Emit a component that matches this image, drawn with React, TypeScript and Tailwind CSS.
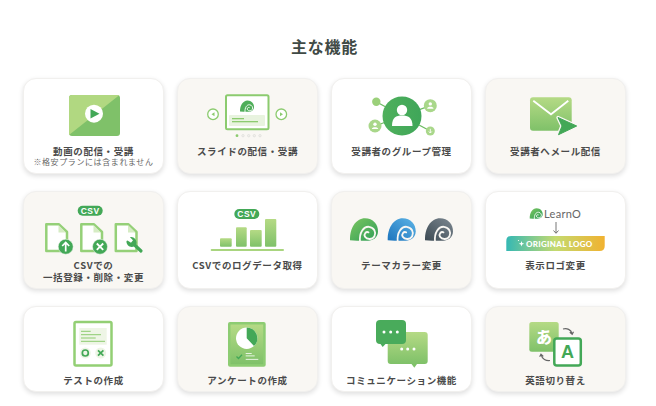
const DARK = "#43a857";
const MID = "#95d078";

function Defs() {
  return (
    <svg className="absolute h-0 w-0" aria-hidden="true">
      <defs>
        <linearGradient id="soft" x1="0" y1="0" x2="0" y2="1">
          <stop offset="0" stopColor="#b5da85" />
          <stop offset="1" stopColor="#7fc169" />
        </linearGradient>
        <linearGradient id="deep" x1="0" y1="0" x2="1" y2="0">
          <stop offset="0" stopColor="#4fb05c" />
          <stop offset="1" stopColor="#3fa659" />
        </linearGradient>
        <linearGradient id="swirlGreen" x1="0" y1="0" x2="1" y2="1">
          <stop offset="0" stopColor="#7cc660" />
          <stop offset="1" stopColor="#2f9e58" />
        </linearGradient>
        <linearGradient id="swirlBlue" x1="0" y1="1" x2="1" y2="0">
          <stop offset="0" stopColor="#1c74bd" />
          <stop offset="1" stopColor="#5db4e6" />
        </linearGradient>
        <linearGradient id="swirlGrey" x1="0" y1="1" x2="1" y2="0">
          <stop offset="0" stopColor="#3c4a53" />
          <stop offset="1" stopColor="#7c8790" />
        </linearGradient>
        <linearGradient id="banner" x1="0" y1="0" x2="1" y2="0">
          <stop offset="0" stopColor="#35b8b4" />
          <stop offset="0.5" stopColor="#c4da70" />
          <stop offset="1" stopColor="#f1b230" />
        </linearGradient>
      </defs>
    </svg>
  );
}

// swirl logo, drawn in a 28x22 box: a solid dome with a white spiral cut through it
function Swirl({ x, y, w, fill, cut = "#fff" }: { x: number; y: number; w: number; fill: string; cut?: string }) {
  const s = w / 28;
  return (
    <g transform={`translate(${x} ${y}) scale(${s})`}>
      <path d="M0 22C-0.5 10 6 0 15 0C23 0 28 6 28 13C28 19 23 22.500 18 22.500H7Z" fill={fill} />
      <path
        d="M10 23.500C9 14 14 8 19 8.500C24 9 26.500 14 24.500 18C22.500 21.500 17 21.500 15 18.500C13.500 15.500 16 13 18.500 14"
        fill="none"
        stroke={cut}
        strokeWidth="1.800"
        strokeLinecap="round"
      />
    </g>
  );
}

function VideoIcon() {
  return (
    <svg width="141" height="52" viewBox="0 0 141 52">
      <rect x="46" y="6" width="51" height="41" rx="3" fill="#7fc169" />
      <path d="M49 6H96.500L46 46V9Q46 6 49 6Z" fill="#b1d881" />
      <circle cx="71" cy="24.700" r="9" fill="#fff" />
      <path d="M67.500 20L76.500 24.700L67.500 29.500Z" fill={DARK} />
    </svg>
  );
}

function SlideIcon() {
  return (
    <svg width="141" height="52" viewBox="0 0 141 52">
      <rect x="49" y="6.300" width="42.500" height="34" rx="1.500" fill="#fff" stroke="#8ccb6f" strokeWidth="2" />
      <Swirl x={63} y={11.500} w={14} fill="#4fae5a" />
      <rect x="52" y="26" width="36" height="11" rx="1" fill="#e8f3df" />
      <rect x="55" y="29" width="12" height="1.300" fill="#8ccb6f" />
      <rect x="55" y="32" width="26" height="1.300" fill="#8ccb6f" />
      <circle cx="36" cy="25.300" r="5.300" fill="#fff" stroke="#8ccb6f" strokeWidth="1.300" />
      <path d="M37.500 23.300V27.300L34.500 25.300Z" fill="#8ccb6f" />
      <circle cx="104.300" cy="25.300" r="5.300" fill="#fff" stroke="#8ccb6f" strokeWidth="1.300" />
      <path d="M103 23.300V27.300L106 25.300Z" fill="#8ccb6f" />
      <circle cx="60" cy="46.700" r="1.400" fill="#8ccb6f" />
      <g fill="#f3f2ee" stroke="#d9d9d5" strokeWidth="0.600">
        <circle cx="66" cy="46.700" r="1.200" />
        <circle cx="71.700" cy="46.700" r="1.200" />
        <circle cx="77.300" cy="46.700" r="1.200" />
        <circle cx="83" cy="46.700" r="1.200" />
      </g>
    </svg>
  );
}

function MiniPerson({ cx, cy }: { cx: number; cy: number }) {
  return (
    <g fill="#fff">
      <circle cx={cx} cy={cy - 1.800} r="1.700" />
      <path d={`M${cx - 3.200} ${cy + 3}C${cx - 3.200} ${cy + 0.500} ${cx + 3.200} ${cy + 0.500} ${cx + 3.200} ${cy + 3}Z`} />
    </g>
  );
}

function GroupIcon() {
  return (
    <svg width="141" height="52" viewBox="0 0 141 52">
      <g stroke="#6dbb62" strokeWidth="1.300">
        <line x1="45.300" y1="12.700" x2="71" y2="27" />
        <line x1="99.300" y1="16.700" x2="71" y2="27" />
        <line x1="44" y1="37" x2="71" y2="27" />
        <line x1="99.300" y1="42" x2="71" y2="27" />
      </g>
      <circle cx="45.300" cy="12.700" r="4.200" fill="#9bd07a" />
      <circle cx="99.300" cy="16.700" r="6.500" fill="#a9d78a" />
      <MiniPerson cx={99.300} cy={16.700} />
      <circle cx="44" cy="37" r="6.500" fill="#a9d78a" />
      <MiniPerson cx={44} cy={37} />
      <circle cx="99.300" cy="42" r="4.500" fill="#a9d78a" />
      <path d="M99.300 39.800V43.800M97.800 42.500L99.300 44L100.800 42.500" stroke="#fff" strokeWidth="0.900" fill="none" />
      <circle cx="71" cy="27" r="19.500" fill="url(#deep)" />
      <circle cx="71" cy="21" r="5.200" fill="#fff" />
      <path d="M61 37C61 28.500 65 26.500 71 26.500C77 26.500 81.500 28.500 81.500 37Z" fill="#fff" />
    </svg>
  );
}

function MailIcon() {
  return (
    <svg width="141" height="52" viewBox="0 0 141 52">
      <rect x="45" y="8.300" width="41.700" height="33.400" rx="3" fill="url(#soft)" />
      <path d="M48.300 11.700L66 25.300L83.300 11.700" fill="none" stroke="#fff" strokeWidth="1.800" />
      <path d="M73 28.500L91.700 37L73.500 45.700L77 37Z" fill="#f9f7f3" stroke="#f9f7f3" strokeWidth="3.500" strokeLinejoin="round" />
      <path d="M73 28.500L91.700 37L73.500 45.700L77 37Z" fill={DARK} stroke={DARK} strokeWidth="1" strokeLinejoin="round" />
    </svg>
  );
}

function Pill({ x, y }: { x: number; y: number }) {
  return (
    <g>
      <rect x={x} y={y} width="25" height="10" rx="5" fill={DARK} />
      <text
        x={x + 12.500}
        y={y + 8}
        textAnchor="middle"
        fill="#fff"
        fontSize="8.500"
        fontWeight="700"
        letterSpacing="0.500"
        className="font-['Liberation_Sans',sans-serif]"
      >
        CSV
      </text>
    </g>
  );
}

function Doc({ x, y }: { x: number; y: number }) {
  return (
    <g>
      <path
        d={`M${x + 1.300} ${y + 1.300}H${x + 14}L${x + 22} ${y + 9}V${y + 28}H${x + 1.300}Z`}
        fill="#fff"
        stroke={MID}
        strokeWidth="2.500"
        strokeLinejoin="round"
      />
      <path d={`M${x + 13.500} ${y + 2}V${y + 9.500}H${x + 21}Z`} fill="#d6ecc4" />
    </g>
  );
}

function CsvDocsIcon() {
  return (
    <svg width="141" height="52" viewBox="0 0 141 52">
      <Pill x={54.700} y={2.700} />
      <Doc x={22} y={20} />
      <circle cx="42.700" cy="43.700" r="7.500" fill={DARK} stroke="#f9f7f3" strokeWidth="0.500" />
      <path d="M42.700 48.500V39.800M39.200 43L42.700 39.500L46.200 43" fill="none" stroke="#fff" strokeWidth="1.700" />
      <Doc x={57} y={20} />
      <circle cx="77" cy="43.700" r="7.500" fill={DARK} stroke="#f9f7f3" strokeWidth="0.500" />
      <path d="M73.800 40.500L80.200 46.900M80.200 40.500L73.800 46.900" stroke="#fff" strokeWidth="1.800" />
      <Doc x={91.500} y={20} />
      <path d="M110 40.500L118 48" stroke={DARK} strokeWidth="3.200" strokeLinecap="round" />
      <path d="M103.500 38C103 42.500 108 45.500 111.500 43L113.500 40.500C114 37 111 33.500 107.500 34L107 34.300L110 37.300L108 39.800L104.500 37.500Z" fill={DARK} />
    </svg>
  );
}

function LogDataIcon() {
  return (
    <svg width="141" height="52" viewBox="0 0 141 52">
      <Pill x={57.300} y={6} />
      <rect x="43" y="35.300" width="11.700" height="8.400" rx="1" fill="url(#soft)" />
      <rect x="59" y="24.300" width="10.700" height="19.400" rx="1" fill="url(#soft)" />
      <rect x="73" y="27" width="11.700" height="16.700" rx="1" fill="url(#soft)" />
      <rect x="88" y="16" width="11.300" height="27.700" rx="1" fill="url(#soft)" />
      <rect x="33.700" y="46" width="73.300" height="2" rx="1" fill="#a9d57f" />
    </svg>
  );
}

function ThemeIcon() {
  return (
    <svg width="141" height="52" viewBox="0 0 141 52">
      <Swirl x={19} y={15.300} w={28} fill="url(#swirlGreen)" cut="#f9f7f3" />
      <Swirl x={56.700} y={15.300} w={28} fill="url(#swirlBlue)" cut="#f9f7f3" />
      <Swirl x={94} y={15.300} w={28} fill="url(#swirlGrey)" cut="#f9f7f3" />
    </svg>
  );
}

function LogoIcon() {
  return (
    <svg width="141" height="52" viewBox="0 0 141 52">
      <Swirl x={44.700} y={5.300} w={13} fill="url(#swirlGreen)" />
      <text x="59" y="15" fontSize="11" fill="#666" letterSpacing="0.300" className="font-['Lato',sans-serif]">
        LearnO
      </text>
      <path d="M71 19V30M68.500 27.500L71 30.300L73.500 27.500" fill="none" stroke="#666" strokeWidth="0.900" />
      <path d="M26.300 33H119.700V43Q119.700 48 114.700 48H21.300V38Q21.300 33 26.300 33Z" fill="url(#banner)" />
      <path d="M36.500 38L37.200 40L39.200 40.700L37.200 41.400L36.500 43.400L35.800 41.400L33.800 40.700L35.800 40Z" fill="#fff" />
      <circle cx="33.500" cy="37.500" r="0.600" fill="#fff" />
      <text x="41" y="43.700" fontSize="8" fontWeight="900" fill="#fff" letterSpacing="0.300" className="font-['Lato',sans-serif]">
        ORIGINAL LOGO
      </text>
    </svg>
  );
}

function TestIcon() {
  return (
    <svg width="141" height="52" viewBox="0 0 141 52">
      <rect x="51.500" y="4" width="37" height="43.500" rx="1.500" fill="#fff" stroke="#93cf74" strokeWidth="2.500" />
      <rect x="56.300" y="10" width="27.400" height="16.700" fill="#eef5e6" />
      <g fill="#8ccb6f">
        <rect x="58" y="12.800" width="9.700" height="1" />
        <rect x="58" y="16.200" width="20" height="1" />
        <rect x="58" y="19.500" width="14.700" height="1" />
        <rect x="58" y="22.800" width="24" height="1" />
      </g>
      <circle cx="62.300" cy="35" r="5.500" fill="#eef5e6" />
      <circle cx="62.300" cy="35" r="3" fill="none" stroke={DARK} strokeWidth="1.700" />
      <circle cx="77.700" cy="35" r="5.500" fill="#eef5e6" />
      <path d="M75 32.300L80.400 37.700M80.400 32.300L75 37.700" stroke={DARK} strokeWidth="1.700" />
    </svg>
  );
}

function SurveyIcon() {
  return (
    <svg width="141" height="52" viewBox="0 0 141 52">
      <rect x="51" y="4" width="37.700" height="44.700" rx="2" fill="#8dcc72" />
      <rect x="53.500" y="6.500" width="32.700" height="39.700" fill="url(#soft)" />
      <circle cx="69.700" cy="20.300" r="10.700" fill="#fff" />
      <path d="M69.700 20.300V9.600A10.700 10.700 0 0 1 77 28Z" fill={DARK} />
      <path d="M59.500 38.500L61.500 40.500L65 36.800" fill="none" stroke={DARK} strokeWidth="1.300" />
      <g fill="#fff">
        <rect x="68.700" y="35" width="6" height="0.800" />
        <rect x="68.700" y="37.500" width="9" height="0.800" />
        <rect x="68.700" y="40.900" width="12.600" height="0.800" />
      </g>
    </svg>
  );
}

function ChatIcon() {
  return (
    <svg width="141" height="52" viewBox="0 0 141 52">
      <rect x="56.700" y="14" width="40" height="32" rx="3" fill="url(#soft)" />
      <path d="M80.500 46H86L83.300 49.700Z" fill="#7fc169" />
      <rect x="45" y="2" width="30" height="24" rx="4" fill="#49ab5b" />
      <path d="M49.500 26H54.500L51.700 29Z" fill="#49ab5b" />
      <g fill="#fff">
        <circle cx="53" cy="14" r="1.500" />
        <circle cx="59.700" cy="14" r="1.500" />
        <circle cx="66.300" cy="14" r="1.500" />
        <circle cx="70.700" cy="31" r="1.500" />
        <circle cx="76.700" cy="31" r="1.500" />
        <circle cx="83" cy="31" r="1.500" />
      </g>
    </svg>
  );
}

function LangIcon() {
  return (
    <svg width="141" height="52" viewBox="0 0 141 52">
      <rect x="44.300" y="4" width="29.400" height="29.700" rx="2.500" fill="url(#soft)" />
      <text x="59" y="25" textAnchor="middle" fontSize="16" fontWeight="900" fill="#fff">
        あ
      </text>
      <rect x="69.300" y="20.500" width="26.500" height="27" rx="2.500" fill="#fff" stroke={DARK} strokeWidth="2.500" />
      <text x="82.500" y="40" textAnchor="middle" fontSize="18" fontWeight="700" fill={DARK} className="font-['Liberation_Sans',sans-serif]">
        A
      </text>
      <path d="M78 11C82 10 86 11.500 87 15.500M84.800 14.200L87.200 16.200L88.500 13.700" fill="none" stroke="#666" strokeWidth="1.200" />
      <path d="M65 42.500C61 43 57 41 56.200 37M58.300 38.400L56 36.300L54.700 38.800" fill="none" stroke="#666" strokeWidth="1.200" />
    </svg>
  );
}

const rows = [
  [
    { icon: <VideoIcon />, label: "動画の配信・受講", note: "※格安プランには含まれません" },
    { icon: <SlideIcon />, label: "スライドの配信・受講" },
    { icon: <GroupIcon />, label: "受講者のグループ管理" },
    { icon: <MailIcon />, label: "受講者へメール配信" },
  ],
  [
    { icon: <CsvDocsIcon />, label: "CSVでの", label2: "一括登録・削除・変更" },
    { icon: <LogDataIcon />, label: "CSVでのログデータ取得" },
    { icon: <ThemeIcon />, label: "テーマカラー変更" },
    { icon: <LogoIcon />, label: "表示ロゴ変更" },
  ],
  [
    { icon: <TestIcon />, label: "テストの作成" },
    { icon: <SurveyIcon />, label: "アンケートの作成" },
    { icon: <ChatIcon />, label: "コミュニケーション機能" },
    { icon: <LangIcon />, label: "英語切り替え" },
  ],
];

const rowClass = ["h-[96px] pt-[11px]", "h-[98px] pt-3", "h-[86px] pt-3"];

export default function App() {
  return (
    <div className="h-[406px] w-[656px] overflow-hidden bg-white pl-[23px] pr-[30px] pt-[35px] font-['Noto_Sans_CJK_JP',sans-serif]">
      <Defs />
      <h1 className="h-[43px] text-center text-[16px] font-bold leading-[22px] tracking-[0.8px] text-[#3f4a45]">
        主な機能
      </h1>
      <div className="flex flex-col gap-[17px]">
        {rows.map((row, r) => (
          <div key={r} className="flex gap-[13px]">
            {row.map((card, c) => (
              <div
                key={c}
                className={`flex w-[141px] flex-col items-center rounded-[13px] border border-[#f1f0ee] shadow-[0_2px_5px_rgba(0,0,0,0.13)] ${rowClass[r]} ${
                  (r + c) % 2 === 0 ? "bg-white" : "bg-[#f9f7f3]"
                }`}
              >
                <div className="-mt-px h-[52px] w-[141px] shrink-0">{card.icon}</div>
                <div className="mt-1 text-center text-[9.500px] font-bold leading-[12px] tracking-[0.6px] text-[#4a4a4a]">
                  {card.label}
                  {card.label2 && (
                    <>
                      <br />
                      {card.label2}
                    </>
                  )}
                </div>
                {card.note && (
                  <div className="text-[8px] leading-[10px] tracking-[0.6px] text-[#666]">{card.note}</div>
                )}
              </div>
            ))}
          </div>
        ))}
      </div>
    </div>
  );
}
